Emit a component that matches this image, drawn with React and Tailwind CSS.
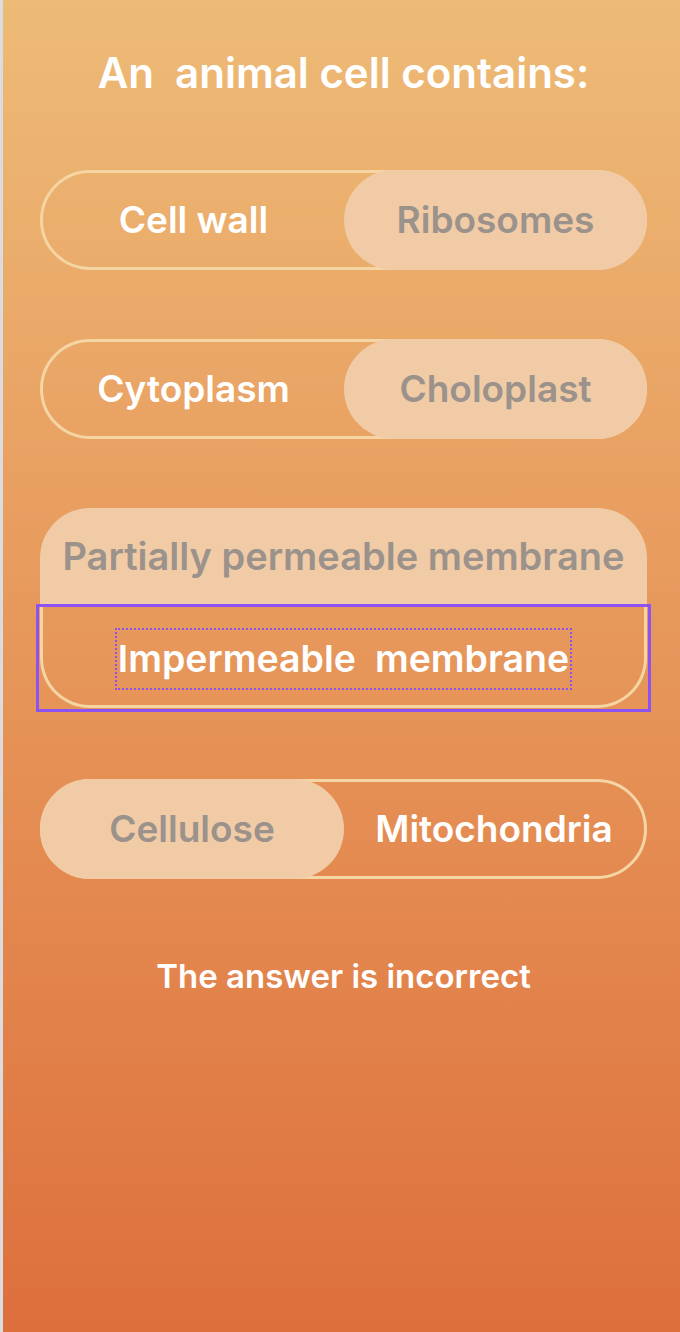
import React from "react";

const font = { fontFamily: "Inter, 'Noto Sans', sans-serif" };

function Pill({ left, right, filled }) {
  const fill = "flex items-center justify-center bg-[#f0cba6] text-[#9b928b] rounded-full -my-[3px]";
  const plain = "flex items-center justify-center text-white";
  return (
    <div className="w-[607px] h-[100px] rounded-full border-[3px] border-[#f4d5a3] flex text-[37px] font-semibold">
      {filled === "right" ? (
        <>
          <div className={`w-[301px] ${plain}`}>{left}</div>
          <div className={`flex-1 -mr-[3px] ${fill}`}>{right}</div>
        </>
      ) : (
        <>
          <div className={`w-[304px] -ml-[3px] ${fill}`}>{left}</div>
          <div className={`flex-1 ${plain}`}>{right}</div>
        </>
      )}
    </div>
  );
}

export default function App() {
  return (
    <div className="flex w-[680px] h-[1332px] bg-[#dcdcdc]" style={font}>
      <div className="ml-[3px] flex-1 h-full bg-gradient-to-b from-[#edbb76] to-[#dd6f3d] flex flex-col pl-[37px]">
        <h1 className="h-[144px] flex items-center justify-center text-white text-[42px] font-semibold whitespace-pre w-[607px]">
          An  animal cell contains:
        </h1>
        <div className="mt-[26px]">
          <Pill left="Cell wall" right="Ribosomes" filled="right" />
        </div>
        <div className="mt-[69px]">
          <Pill left="Cytoplasm" right="Choloplast" filled="right" />
        </div>
        <div className="mt-[69px] w-[607px] flex flex-col text-[38px] font-semibold">
          <div className="h-[97px] rounded-t-[50px] bg-[#f0cba6] text-[#9b928b] flex items-center justify-center">
            Partially permeable membrane
          </div>
          <div className="relative h-[103px] border-[3px] border-t-0 border-[#f4d5a3] rounded-b-[50px] flex items-start justify-center pt-[23px]">
            <span className="h-[62px] px-[1px] border-2 border-dotted border-[#8d52f2] text-white text-[37.5px] whitespace-pre flex items-center">
              Impermeable  membrane
            </span>
            <div className="absolute -left-[7px] -right-[7px] -top-[1px] -bottom-[7px] border-[3px] border-[#8d52f2]" />
          </div>
        </div>
        <div className="mt-[71px]">
          <Pill left="Cellulose" right="Mitochondria" filled="left" />
        </div>
        <p className="mt-[73px] w-[607px] text-center text-white text-[33px] font-semibold">
          The answer is incorrect
        </p>
      </div>
    </div>
  );
}
